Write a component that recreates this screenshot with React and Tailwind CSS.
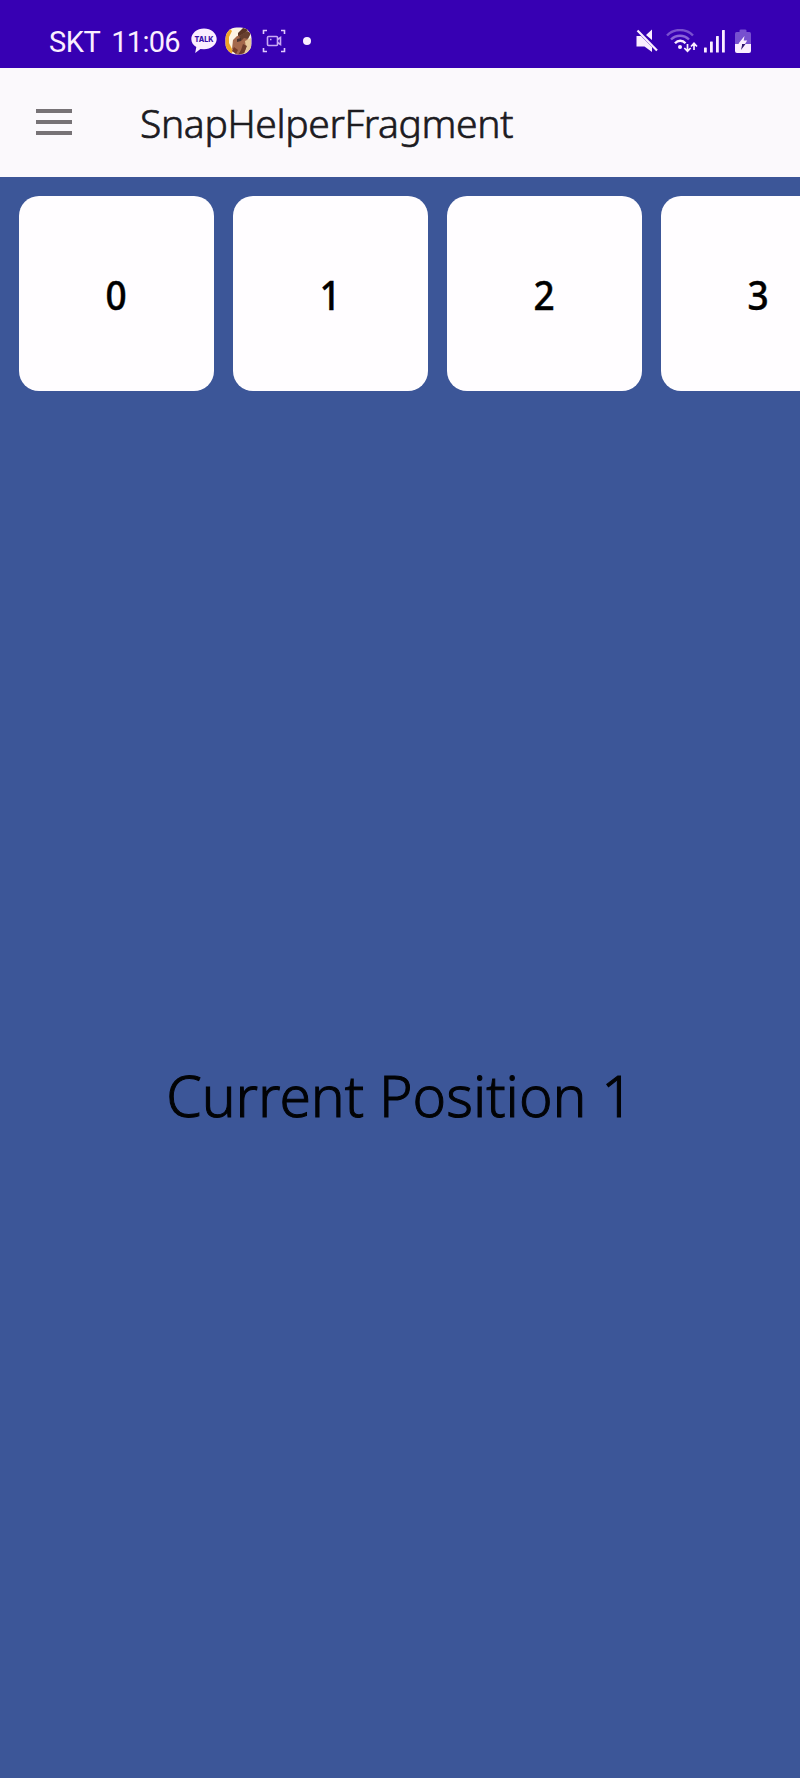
import React from "react";

function ChatIcon() {
  return (
    <svg className="h-[26px] w-[26px]" viewBox="0 0 26 26">
      <path d="M13 .5C6 .5.3 5.200.3 11c0 3.500 2 6.300 5 8L4.200 25l5.200-4 3.600.3c7 0 12.700-4.500 12.700-10.300S20 .5 13 .5Z" fill="#fbeeff" />
      <text x="13" y="14" textAnchor="middle" fontFamily="Inter, sans-serif" fontWeight="800" fontSize="8" fill="#3a10a8" textLength="19" lengthAdjust="spacingAndGlyphs">TALK</text>
    </svg>
  );
}

function Avatar() {
  return (
    <svg className="h-[28px] w-[27px]" viewBox="0 0 27 28">
      <defs>
        <clipPath id="avatar"><rect x=".5" y=".5" width="26" height="27" rx="11" /></clipPath>
      </defs>
      <g clipPath="url(#avatar)">
        <rect width="27" height="28" fill="#fdf3e3" />
        <path d="M0 6 5 2l2 2-3 6v6l4 8-2 3-6-5Z" fill="#eda52a" />
        <path d="M13 6 18 1l6 1-4 4-7 4Z" fill="#5b3425" />
        <path d="m8 13 4-4 8-1 3 5-2 13-9 2-5-6Z" fill="#a4684c" />
        <path d="m14 9 8-5 4 2-3 6-4-1-3 3Z" fill="#68402f" />
        <path d="m20 14 6-3v14l-7 2 2-6Z" fill="#e6c89b" />
        <path d="m18 17 4 2-3 7-6 2 3-5Z" fill="#6d3c2c" />
        <path d="m12 12 4-1v3l-4 1Z" fill="#49322f" />
        <path d="m9 20 4 3-2 4-4-3Z" fill="#753a2b" />
      </g>
    </svg>
  );
}

function RecordIcon() {
  return (
    <svg className="h-[24px] w-[24px]" viewBox="0 0 24 24" fill="none" stroke="#c9a9f4" strokeWidth="1.600">
      <path d="M1.500 5V1.500H5M19 1.500h3.500V5M1.500 19v3.500H5M19 22.500h3.500V19" stroke="#dfc9fb" />
      <rect x="5.500" y="7.500" width="10" height="9" rx="1" />
      <path d="m15.500 10.500 3-2v7l-3-2M8 10.500h1.500" />
    </svg>
  );
}

function MuteIcon() {
  return (
    <svg className="h-[24px] w-[22px]" viewBox="0 0 22 24">
      <path d="M.5 7H5L16 18v5l-7.500-5.500h-8ZM10 6l6-5.500V11Z" fill="#fbeeff" />
      <path d="m1.500 1.500 19.500 20" stroke="#fbeeff" strokeWidth="2.200" />
    </svg>
  );
}

function WifiIcon() {
  return (
    <svg className="h-[24px] w-[32px]" viewBox="0 0 32 24" fill="none" strokeWidth="2.400">
      <path d="M1 6.500C8-.8 20-.8 27 6.500" stroke="#7950cf" />
      <path d="M5 10.500c5-5 13-5 18 0" stroke="#8b65d8" />
      <path d="M9 14.200c3-3.200 7.500-3.200 10.500 0" stroke="#fbeeff" />
      <circle cx="14" cy="18" r="2" fill="#fbeeff" />
      <path d="M21.500 15v7m-3.200-3 3.200 3.200 3.200-3.200M28 21v-6.500M25 17.500l3-3.200 3 3.200" stroke="#fbeeff" strokeWidth="1.700" />
    </svg>
  );
}

function SignalIcon() {
  return (
    <svg className="h-[23px] w-[21px]" viewBox="0 0 21 23" fill="#fbeeff">
      <rect x="0" y="17.500" width="2.800" height="5" rx=".5" />
      <rect x="6" y="11.500" width="2.800" height="11" rx=".5" />
      <rect x="12" y="6" width="2.800" height="16.500" rx=".5" />
      <rect x="18" y="0" width="2.800" height="22.500" rx=".5" />
    </svg>
  );
}

function BatteryIcon() {
  return (
    <svg className="h-[25px] w-[16px]" viewBox="0 0 16 25">
      <path d="M4.500 3V1.500Q4.500.5 6 .5h4q1.500 0 1.500 1V3h3Q16 3 16 5v10H0V5q0-2 1.500-2Z" fill="#7750cf" />
      <path d="M0 15h16v7q0 2-2 2H2q-2 0-2-2Z" fill="#fbeeff" />
      <path d="M3.500 14.500 9.500 7l-.8 4.500h3.500L10 15H4Z" fill="#fbeeff" />
      <path d="M7 15h3.500l-4.500 6 1-4.500Z" fill="#2f146e" />
    </svg>
  );
}

function StatusBar() {
  return (
    <header className="flex h-[68px] items-start bg-[#3700b3] pl-[49px] pr-[49px] pt-[28px] font-['Roboto',sans-serif] text-[#fbeeff]">
      <div className="flex h-[28px] w-[142px] items-center gap-[11px] whitespace-pre text-[29px] leading-[28px]">
        <span className="tracking-[-0.5px]">SKT</span>
        <span className="tracking-[-0.7px]">11:06</span>
      </div>
      <div className="flex h-[26px] items-center">
        <ChatIcon />
        <span className="ml-[8px]"><Avatar /></span>
        <span className="ml-[10px]"><RecordIcon /></span>
        <span className="ml-[17px] size-[8px] rounded-full bg-[#fbeeff]" />
      </div>
      <div className="ml-auto flex h-[26px] items-center">
        <MuteIcon />
        <span className="ml-[8px]"><WifiIcon /></span>
        <span className="ml-[6px]"><SignalIcon /></span>
        <span className="ml-[10px]"><BatteryIcon /></span>
      </div>
    </header>
  );
}

function Toolbar() {
  return (
    <div className="flex h-[109px] items-center bg-[#fbf9fc] pl-[36px]">
      <button aria-label="Open navigation" className="flex w-[36px] flex-col gap-[7px] pb-[1px]">
        <span className="h-[4px] w-full bg-[#777376]" />
        <span className="h-[4px] w-full bg-[#777376]" />
        <span className="h-[4px] w-full bg-[#777376]" />
      </button>
      <h1 className="ml-[68px] whitespace-nowrap text-[39px] font-light leading-[52px] tracking-[-0.35px] text-[#1c1b1f] [-webkit-text-stroke:0.7px_#1c1b1f]">SnapHelperFragment</h1>
    </div>
  );
}

export default function App() {
  return (
    <div className="flex h-[1778px] w-[800px] flex-col overflow-hidden bg-[#3c5698] font-['Noto_Sans',sans-serif]">
      <StatusBar />
      <Toolbar />
      <div className="flex shrink-0 gap-[19px] overflow-hidden pl-[19px] pt-[19px]">
        {[0, 1, 2, 3].map((n) => (
          <div key={n} className="flex size-[195px] shrink-0 items-center justify-center rounded-[20px] bg-[#fffdff] pt-[2px] text-[39px] font-medium leading-[54px] text-black [-webkit-text-stroke:0.4px_#000]">
            <span className="scale-x-95">{n}</span>
          </div>
        ))}
      </div>
      <main className="flex flex-1 justify-center pt-[664px]">
        <p className="whitespace-nowrap text-[57px] font-light leading-[80px] text-[#020305] [-webkit-text-stroke:1px_#020305]">Current Position 1</p>
      </main>
    </div>
  );
}
